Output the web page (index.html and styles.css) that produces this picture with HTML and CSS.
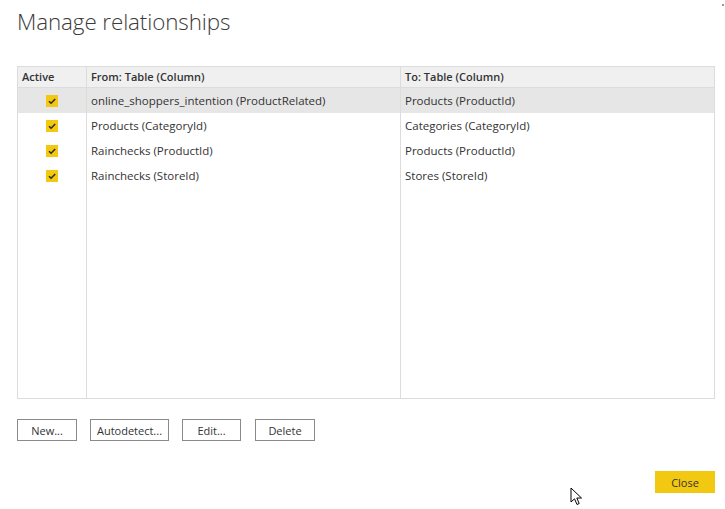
FILE: index.html
```html
<!DOCTYPE html>
<html>
<head>
<meta charset="utf-8">
<link rel="stylesheet" href="styles.css">
</head>
<body>
<div class="dialog">
  <h1 class="title">Manage relationships</h1>
  <table class="rels">
    <thead>
      <tr><th class="c-active">Active</th><th class="c-from">From: Table (Column)</th><th class="c-to">To: Table (Column)</th></tr>
    </thead>
    <tbody>
      <tr class="selected"><td class="c-active"><span class="check"><svg viewBox="0 0 12 12" width="12" height="12"><path d="M3 6.2 L5.1 8.3 L9.2 4" fill="none" stroke="#2b2b2b" stroke-width="1.5"/></svg></span></td><td>online_shoppers_intention (ProductRelated)</td><td>Products (ProductId)</td></tr>
      <tr><td class="c-active"><span class="check"><svg viewBox="0 0 12 12" width="12" height="12"><path d="M3 6.2 L5.1 8.3 L9.2 4" fill="none" stroke="#2b2b2b" stroke-width="1.5"/></svg></span></td><td>Products (CategoryId)</td><td>Categories (CategoryId)</td></tr>
      <tr><td class="c-active"><span class="check"><svg viewBox="0 0 12 12" width="12" height="12"><path d="M3 6.2 L5.1 8.3 L9.2 4" fill="none" stroke="#2b2b2b" stroke-width="1.5"/></svg></span></td><td>Rainchecks (ProductId)</td><td>Products (ProductId)</td></tr>
      <tr><td class="c-active"><span class="check"><svg viewBox="0 0 12 12" width="12" height="12"><path d="M3 6.2 L5.1 8.3 L9.2 4" fill="none" stroke="#2b2b2b" stroke-width="1.5"/></svg></span></td><td>Rainchecks (StoreId)</td><td>Stores (StoreId)</td></tr>
      <tr class="filler"><td></td><td></td><td></td></tr>
    </tbody>
  </table>
  <div class="actions">
    <button class="btn">New...</button>
    <button class="btn btn-wide">Autodetect...</button>
    <button class="btn btn-edit">Edit...</button>
    <button class="btn btn-delete">Delete</button>
  </div>
  <div class="footer">
    <button class="btn btn-primary">Close</button>
  </div>
</div>
<span class="corner-dot"></span>
<svg class="cursor" width="14" height="20" viewBox="0 0 14 20"><path d="M1 1 L1 15 L4.5 11.8 L7 17.5 L9.2 16.5 L6.8 11 L11.5 11 Z" fill="#fff" stroke="#000" stroke-width="1" stroke-linejoin="miter"/></svg>
</body>
</html>
```
FILE: styles.css
```css
html, body {
  margin: 0;
  padding: 0;
  background: #fff;
}
body {
  width: 725px;
  height: 509px;
  overflow: hidden;
  position: relative;
  font-family: "Open Sans", "Noto Sans", sans-serif;
  color: #333;
}
.dialog {
  padding: 0 10px 0 17px;
  display: flex;
  flex-direction: column;
}
.title {
  margin: 6px 0 0 0;
  font-family: "Open Sans", sans-serif;
  font-weight: 300;
  font-size: 22.4px;
  line-height: 32px;
  color: #3b3b3b;
  letter-spacing: -0.1px;
  height: 60px;
}
.rels {
  border-collapse: collapse;
  width: 698px;
  height: 333px;
  table-layout: fixed;
  font-size: 11.5px;
  border: 1px solid #dcdcdc;
}
.rels th, .rels td {
  padding: 0 4px;
  text-align: left;
  white-space: nowrap;
  border-left: 1px solid #dcdcdc;
  border-right: 1px solid #dcdcdc;
}
.rels th {
  background: #f0f0f0;
  font-weight: 600;
  font-size: 11px;
  height: 19px;
  padding-bottom: 1px;
  border-bottom: 1px solid #dcdcdc;
  color: #333;
}
.c-active { width: 60px; }
.c-from { width: 305px; }
.rels tbody td {
  height: 24px;
  padding-bottom: 1px;
  color: #333;
}
.rels tbody td.c-active {
  text-align: center;
  padding: 0 1px 1px 0;
}
.rels tr.selected td {
  background: #e6e6e6;
}
.rels tr.filler td {
  height: auto;
}
.check {
  display: inline-block;
  width: 12px;
  height: 12px;
  background: #f2c811;
  vertical-align: middle;
}
.check svg { display: block; }
.actions {
  display: flex;
  gap: 13px;
  margin-top: 20px;
}
.btn {
  font-family: "Open Sans", sans-serif;
  font-size: 11px;
  color: #333;
  background: #fff;
  border: 1px solid #8a8a8a;
  width: 60px;
  height: 22px;
  padding: 0;
  border-radius: 0;
}
.btn-wide { width: 79px; }
.btn-edit { width: 59px; }
.btn-delete { width: 60px; margin-left: 1px; }
.footer {
  display: flex;
  justify-content: flex-end;
  margin-top: 30px;
}
.btn-primary {
  background: #f2c811;
  border-color: #f2c811;
  height: 22px;
}
.corner-dot {
  position: absolute;
  right: 1px;
  top: 4px;
  width: 2px;
  height: 2px;
  background: #999;
}
.cursor {
  position: absolute;
  left: 570px;
  top: 487px;
}
```
